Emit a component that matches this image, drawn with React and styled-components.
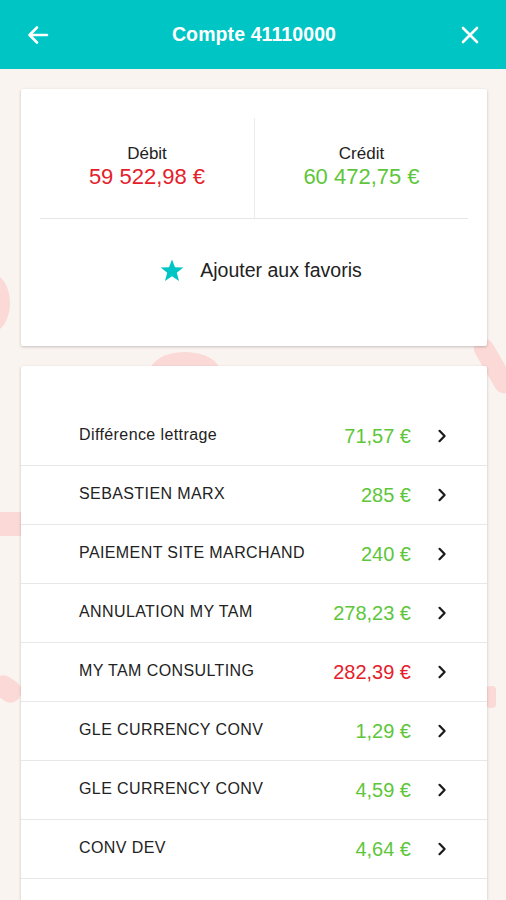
import React from 'react';
import styled, { createGlobalStyle } from 'styled-components';

const GlobalStyle = createGlobalStyle`
  html, body {
    margin: 0;
    padding: 0;
    background: #faf4f0;
    font-family: "Liberation Sans", Arial, sans-serif;
  }
`

const STPage = styled.div`
  position: relative;
  width: 506px;
  height: 900px;
  overflow: hidden;
  background: #faf4f0;
`
// faint pink decoration shapes behind the cards
const STBlob = styled.div`
  position: absolute;
  background: #fbd9d6;
  border-radius: ${p => p.radius || '50%'};
  width: ${p => p.w}px;
  height: ${p => p.h}px;
  left: ${p => p.x}px;
  top: ${p => p.y}px;
  transform: rotate(${p => p.rot || 0}deg);
`
const STHeader = styled.div`
  position: relative;
  z-index: 1;
  height: 69px;
  background: #00c5c5;
  display: flex;
  align-items: center;
  justify-content: space-between;
  padding: 0 24px 0 26px;
  color: #fff;
`
const STTitle = styled.div`
  font-size: 19.5px;
  font-weight: bold;
  letter-spacing: 0.1px;
`
const STIconBtn = styled.div`
  width: 24px;
  height: 24px;
  display: flex;
  align-items: center;
  justify-content: center;
`
const STContent = styled.div`
  position: relative;
  z-index: 1;
  padding: 20px 19px 0 21px;
  display: flex;
  flex-direction: column;
  gap: 20px;
`
const STCard = styled.div`
  background: #fff;
  border-radius: 2px;
  box-shadow: 0 1px 3px rgba(0, 0, 0, 0.22);
`
const STSummary = styled(STCard)`
  height: 257px;
  padding: 29px 19px 0;
  box-sizing: border-box;
`
const STTotals = styled.div`
  display: grid;
  grid-template-columns: 1fr 1fr;
  height: 100px;
  border-bottom: 1px solid #e6e6e6;
`
const STTotal = styled.div`
  display: flex;
  flex-direction: column;
  align-items: center;
  justify-content: center;
  padding-bottom: 2px;
  & + & {
    border-left: 1px solid #ececec;
  }
`
const STTotalLabel = styled.div`
  font-size: 17px;
  color: #222;
  line-height: 20px;
`
const STAmount = styled.div`
  font-size: 22px;
  line-height: 26px;
  color: ${p => (p.negative ? '#e4202b' : '#5ec63a')};
`
const STFavorite = styled.div`
  display: flex;
  align-items: center;
  justify-content: center;
  gap: 16px;
  height: 102px;
  font-size: 19.5px;
  color: #222;
  padding-left: 14px;
`
const STList = styled(STCard)`
  padding-top: 41px;
  height: 560px;
`
const STRow = styled.div`
  display: flex;
  align-items: center;
  height: 59px;
  padding: 0 40px 0 58px;
  border-bottom: 1px solid #e8e8e8;
  box-sizing: border-box;
`
const STLabel = styled.div`
  flex: 1;
  font-size: 16px;
  letter-spacing: 0.4px;
  color: #222;
  padding-bottom: 2px;
`
const STValue = styled.div`
  font-size: 20px;
  color: ${p => (p.negative ? '#e4202b' : '#5ec63a')};
  margin-right: 26px;
`

const rows = [
  { label: 'Différence lettrage', value: '71,57 €' },
  { label: 'SEBASTIEN MARX', value: '285 €' },
  { label: 'PAIEMENT SITE MARCHAND', value: '240 €' },
  { label: 'ANNULATION MY TAM', value: '278,23 €' },
  { label: 'MY TAM CONSULTING', value: '282,39 €', negative: true },
  { label: 'GLE CURRENCY CONV', value: '1,29 €' },
  { label: 'GLE CURRENCY CONV', value: '4,59 €' },
  { label: 'CONV DEV', value: '4,64 €' },
  { label: '', value: '' }
];

const Chevron = () => (
  <svg width="10" height="14" viewBox="0 0 10 14">
    <path d="M2.5 1.8 L7.6 7 L2.5 12.2" fill="none" stroke="#1a1a1a" strokeWidth="2.2" strokeLinecap="round" strokeLinejoin="round" />
  </svg>
);

export default function App() {
  return (
    <STPage>
      <GlobalStyle />
      <STBlob w={36} h={58} x={-26} y={274} />
      <STBlob w={70} h={40} x={150} y={352} />
      <STBlob w={20} h={60} x={484} y={336} rot={-30} radius="12px" />
      <STBlob w={40} h={24} x={-10} y={512} radius="4px" />
      <STBlob w={30} h={22} x={-8} y={678} rot={35} radius="10px" />
      <STBlob w={10} h={22} x={486} y={686} radius="4px" />
      <STHeader>
        <STIconBtn>
          <svg width="22" height="20" viewBox="0 0 22 20">
            <path d="M20 10 H3 M10 2.5 L2.5 10 L10 17.5" fill="none" stroke="#fff" strokeWidth="2.6" strokeLinecap="round" strokeLinejoin="round" />
          </svg>
        </STIconBtn>
        <STTitle>Compte 41110000</STTitle>
        <STIconBtn>
          <svg width="20" height="20" viewBox="0 0 20 20">
            <path d="M3 3 L17 17 M17 3 L3 17" fill="none" stroke="#fff" strokeWidth="2.6" strokeLinecap="round" />
          </svg>
        </STIconBtn>
      </STHeader>
      <STContent>
        <STSummary>
          <STTotals>
            <STTotal>
              <STTotalLabel>Débit</STTotalLabel>
              <STAmount negative>59 522,98 €</STAmount>
            </STTotal>
            <STTotal>
              <STTotalLabel>Crédit</STTotalLabel>
              <STAmount>60 472,75 €</STAmount>
            </STTotal>
          </STTotals>
          <STFavorite>
            <svg width="24" height="23" viewBox="0 0 24 23">
              <path d="M12 0.5 L15 8.2 L23.3 8.6 L16.8 13.8 L19 21.9 L12 17.3 L5 21.9 L7.2 13.8 L0.7 8.6 L9 8.2 Z" fill="#00c5c5" />
            </svg>
            <span>Ajouter aux favoris</span>
          </STFavorite>
        </STSummary>
        <STList>
          {rows.map((row, index) => (
            <STRow key={'row' + index}>
              <STLabel>{row.label}</STLabel>
              {row.value && <STValue negative={row.negative}>{row.value}</STValue>}
              {row.value && <Chevron />}
            </STRow>
          ))}
        </STList>
      </STContent>
    </STPage>
  );
}
